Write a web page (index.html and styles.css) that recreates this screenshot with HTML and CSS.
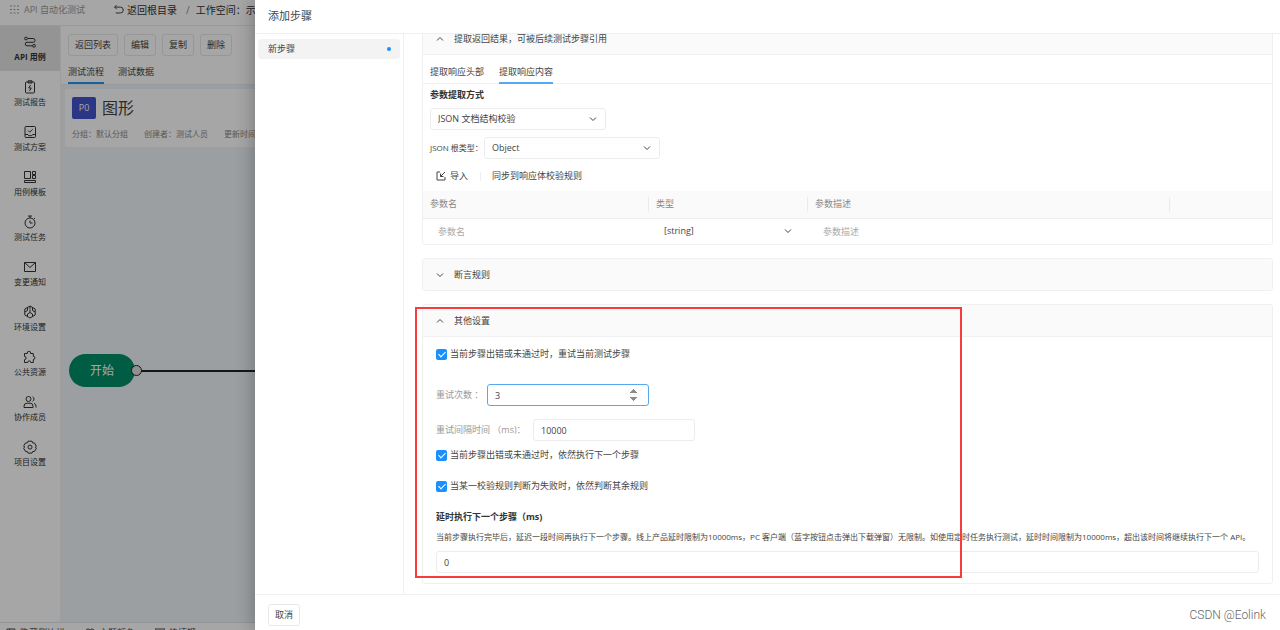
FILE: index.html
```html
<!DOCTYPE html>
<html lang="zh-CN">
<head>
<meta charset="utf-8">
<meta name="viewport" content="width=device-width, initial-scale=1">
<title>API 自动化测试</title>
<link rel="stylesheet" href="styles.css">
</head>
<body>
<svg class="sprite" aria-hidden="true">
  <symbol id="i-down" viewBox="0 0 10 10"><path d="M2 3.500 5 6.500l3-3"/></symbol>
  <symbol id="i-up" viewBox="0 0 10 10"><path d="M2 6.500 5 3.500l3 3"/></symbol>
</svg>

<div class="app">
  <header class="topbar">
    <svg class="grid-icon" viewBox="0 0 9 9"><path d="M0 1h2M3.5 1h2M7 1h2M0 4.5h2M3.5 4.5h2M7 4.5h2M0 8h2M3.5 8h2M7 8h2"/></svg>
    <span class="product">API 自动化测试</span>
    <a class="back" href="#"><svg class="icon back-icon" viewBox="0 0 12 12"><path d="M4 1.2 1.8 3.4 4 5.6M1.8 3.4H8a2.8 2.8 0 0 1 0 6.4H3"/></svg>返回根目录</a>
    <span class="slash">/</span>
    <span>工作空间：示例</span>
  </header>
  <div class="main">
    <nav class="sidebar">
      <a class="side-item active" href="#"><svg class="icon" viewBox="0 0 14 14"><path d="M4.500 3.500h5.600a1.900 1.900 0 0 1 0 3.800H4a1.700 1.700 0 0 0 0 3.500h5.500"/><circle cx="3" cy="3.500" r="1.400"/><circle cx="11" cy="10.800" r="1.400"/></svg>API 用例</a>
      <a class="side-item" href="#"><svg class="icon" viewBox="0 0 14 14"><rect x="2.500" y="2" width="9" height="11" rx="1"/><path d="M5 .8h4v2.200H5zM7.600 5 5.700 8h2.600L6.400 11"/></svg>测试报告</a>
      <a class="side-item" href="#"><svg class="icon" viewBox="0 0 14 14"><rect x="2" y="1.500" width="10.500" height="11" rx="1"/><path d="M2 9.500h3l.8 1.200h3l.8-1.200h3M5 5.500l1.700 1.700 3-3"/></svg>测试方案</a>
      <a class="side-item" href="#"><svg class="icon" viewBox="0 0 14 14"><path d="M1.500 1.500h6v7h-6zM9.500 1.500h3v3h-3zM9.500 5.500h3v3h-3zM1.500 10.500h11v2h-11z"/></svg>用例模板</a>
      <a class="side-item" href="#"><svg class="icon" viewBox="0 0 14 14"><circle cx="7" cy="8" r="5"/><path d="M5 1h4M7 1v2M11 3l1 1M7 5.500V8h2.500"/></svg>测试任务</a>
      <a class="side-item" href="#"><svg class="icon" viewBox="0 0 14 14"><path d="M1.500 2.500h11v9h-11zM1.500 2.500l5.500 5 5.500-5"/></svg>变更通知</a>
      <a class="side-item" href="#"><svg class="icon" viewBox="0 0 14 14"><path d="M7 1l5.200 3v6L7 13 1.800 10V4zM7 1v3M7 7.500 4.500 9M7 7.500 9.500 9M7 7.500v-3M4.500 2.500v3L1.800 7M9.500 2.500v3L12.200 7M4.500 11.500V9M9.500 11.500V9"/></svg>环境设置</a>
      <a class="side-item" href="#"><svg class="icon" viewBox="0 0 14 14"><path d="M1.500 3.500H4.300a1.700 1.700 0 1 1 3.300 0H10.300V6.300a1.600 1.600 0 1 1 0 3.200V12.500H7.800a1.600 1.600 0 0 0-3.200 0H1.500V9.600a1.600 1.600 0 0 0 0-3.200z"/></svg>公共资源</a>
      <a class="side-item" href="#"><svg class="icon" viewBox="0 0 14 14"><circle cx="5.500" cy="4" r="2.500"/><path d="M1 12.500v-1.300a3 3 0 0 1 3-3h3a3 3 0 0 1 3 3v1.300zM9.500 1.700a2.500 2.500 0 0 1 0 4.600M11 8.300a3 3 0 0 1 2 2.900v1.300"/></svg>协作成员</a>
      <a class="side-item" href="#"><svg class="icon" viewBox="0 0 14 14"><path d="M5 1.200h4l.7 1.700 1.800.1 1.900 3.300L12.300 7l1.100 1.200-1.900 3.200-1.800.1L9 13.100H5l-.7-1.600-1.800-.1L.6 8.200 1.700 7 .6 5.900 2.500 3l1.800-.1z"/><circle cx="7" cy="7.100" r="2"/></svg>项目设置</a>
    </nav>
    <main class="work">
      <div class="work-head">
        <div class="actions">
          <button class="btn" type="button">返回列表</button>
          <button class="btn" type="button">编辑</button>
          <button class="btn" type="button">复制</button>
          <button class="btn" type="button">删除</button>
        </div>
        <div class="tabs">
          <a class="tab current" href="#">测试流程</a>
          <a class="tab" href="#">测试数据</a>
        </div>
      </div>
      <section class="case-card">
        <div class="case-title"><span class="priority">P0</span><h1>图形</h1></div>
        <div class="case-meta"><span>分组：默认分组</span><span>创建者：测试人员</span><span>更新时间</span></div>
      </section>
      <div class="canvas">
        <div class="node">开始</div>
        <div class="edge"></div>
        <div class="port"></div>
      </div>
    </main>
  </div>
  <footer class="statusbar">
    <span><svg class="icon" viewBox="0 0 10 10"><path d="M1 1h8v8H1zM3.500 1v8M5 4h4"/></svg>隐藏侧边栏</span>
    <span><svg class="icon" viewBox="0 0 10 10"><circle cx="3" cy="3" r="2"/><circle cx="7" cy="3" r="2"/><path d="M1 9h8"/></svg>主题颜色</span>
    <span><svg class="icon" viewBox="0 0 10 10"><path d="M0 1h10v8H0zM2 4h6"/></svg>快捷键</span>
  </footer>
</div>

<div class="mask"></div>

<section class="drawer" role="dialog" aria-labelledby="drawer-title">
  <header class="drawer-head"><h2 id="drawer-title">添加步骤</h2></header>
  <div class="drawer-body">
    <nav class="steps"><a class="step" href="#">新步骤<span class="dot"></span></a></nav>
    <div class="content">
      <section class="panel first">
        <button class="panel-head" type="button"><svg class="icon chev"><use href="#i-up"/></svg>提取返回结果，可被后续测试步骤引用</button>
        <div class="subtabs">
          <a class="subtab" href="#">提取响应头部</a>
          <a class="subtab current" href="#">提取响应内容</a>
        </div>
        <div class="extract">
          <label class="field-title" for="mode">参数提取方式</label>
          <div class="select"><select id="mode"><option>JSON 文档结构校验</option></select><svg class="icon chev"><use href="#i-down"/></svg></div>
          <div class="line">
            <label class="small" for="root">JSON 根类型：</label>
            <div class="select"><select id="root"><option>Object</option></select><svg class="icon chev"><use href="#i-down"/></svg></div>
          </div>
          <div class="tools">
            <button class="link" type="button"><svg class="icon import" viewBox="0 0 10 10"><path d="M4 1H1v8h8V6M9 1 4.500 5.500M4.500 2.500v3h3"/></svg>导入</button>
            <span class="bar"></span>
            <button class="link" type="button">同步到响应体校验规则</button>
          </div>
        </div>
        <table class="params">
          <colgroup><col class="c-name"><col class="c-type"><col class="c-desc"><col class="c-ops"></colgroup>
          <thead><tr><th><span>参数名</span></th><th><span>类型</span></th><th><span>参数描述</span></th><th><span></span></th></tr></thead>
          <tbody><tr>
            <td><input type="text" placeholder="参数名" aria-label="参数名"></td>
            <td><div class="select plain"><select aria-label="类型"><option>[string]</option></select><svg class="icon chev"><use href="#i-down"/></svg></div></td>
            <td><input type="text" placeholder="参数描述" aria-label="参数描述"></td>
            <td></td>
          </tr></tbody>
        </table>
      </section>

      <section class="panel">
        <button class="panel-head" type="button"><svg class="icon chev"><use href="#i-down"/></svg>断言规则</button>
      </section>

      <section class="panel">
        <button class="panel-head" type="button"><svg class="icon chev"><use href="#i-up"/></svg>其他设置</button>
        <div class="settings">
          <label class="check"><input type="checkbox" checked>当前步骤出错或未通过时，重试当前测试步骤</label>
          <div class="line retry"><label for="times">重试次数 ：</label><input class="box number focus" id="times" type="number" value="3"></div>
          <div class="line gap"><label for="interval">重试间隔时间 （ms)：</label><input class="box number" id="interval" type="number" value="10000"></div>
          <label class="check next"><input type="checkbox" checked>当前步骤出错或未通过时，依然执行下一个步骤</label>
          <label class="check rest"><input type="checkbox" checked>当某一校验规则判断为失败时，依然判断其余规则</label>
          <label class="field-title" for="delay">延时执行下一个步骤（ms)</label>
          <p class="hint">当前步骤执行完毕后，延迟一段时间再执行下一个步骤。线上产品延时限制为10000ms，PC 客户端（蓝字按钮点击弹出下载弹窗）无限制。如使用定时任务执行测试，延时时间限制为10000ms，超出该时间将继续执行下一个 API。</p>
          <input class="box delay" id="delay" type="text" value="0">
        </div>
      </section>
    </div>
  </div>
  <footer class="drawer-foot">
    <button class="btn" type="button">取消</button>
    <span class="watermark">CSDN @Eolink</span>
  </footer>
  <div class="highlight"></div>
</section>
</body>
</html>
```
FILE: styles.css
```css
* { box-sizing: border-box; }
body {
  margin: 0;
  height: 100vh;
  overflow: hidden;
  position: relative;
  font: 9px/14px "Open Sans", "Noto Sans CJK SC", sans-serif;
  color: #444;
}
a { color: inherit; text-decoration: none; }
h1, h2, p { margin: 0; font-weight: 400; }
button, input, select { font: inherit; color: inherit; margin: 0; }
button { cursor: pointer; }
.sprite { display: none; }
.icon { fill: none; stroke: currentColor; stroke-width: 1; flex: none; }
.chev { width: 10px; height: 10px; }

.app { display: flex; flex-direction: column; height: calc(100vh + 12px); background: #fff; }
.topbar {
  display: flex; align-items: center; height: 26px; padding: 0 10px 6px; flex: none;
  border-bottom: 1px solid #ededed; font-size: 10px; white-space: nowrap; color: #333;
}
.grid-icon { width: 9px; height: 9px; margin-right: 5px; stroke: #999; stroke-width: 1; }
.product { font-size: 9px; color: #999; margin-right: 28px; }
.back { display: flex; align-items: center; gap: 3px; }
.back-icon { width: 11px; height: 11px; }
.slash { margin: 0 6px 0 9px; color: #888; }

.main { display: flex; flex: 1; min-height: 0; }
.sidebar { width: 61px; flex: none; background: #fff; border-right: 1px solid #f2f2f2; }
.side-item {
  display: flex; flex-direction: column; align-items: center; gap: 1px;
  height: 45px; padding-top: 9px; font-size: 8px; color: #333;
}
.side-item .icon { width: 14px; height: 14px; }
.side-item.active { background: #e4e4e4; font-weight: 700; }

.work { flex: 1; display: flex; flex-direction: column; min-width: 0; background: #eef4f8; }
.work-head { background: #fff; border-bottom: 1px solid #e8ecef; padding: 8px 7px 0; }
.actions { display: flex; gap: 6px; }
.btn {
  height: 22px; padding: 0 6px; background: #fff; border: 1px solid #e8e8e8; border-radius: 3px;
  white-space: nowrap;
}
.tabs { display: flex; gap: 14px; }
.tab { padding: 9px 0 3px; height: 28px; border-bottom: 2px solid transparent; }
.tab.current { border-color: #2196f3; }
.case-card { margin: 4px; padding: 7px; height: 58px; background: #fff; border-radius: 3px; }
.case-title { display: flex; align-items: center; gap: 6px; height: 24px; }
.case-title h1 { font-size: 16px; line-height: 24px; }
.priority { width: 24px; height: 22px; border-radius: 2px; background: #4353cb; color: #fff; text-align: center; line-height: 22px; }
.case-meta { display: flex; gap: 16px; margin-top: 7px; font-size: 8px; color: #888; white-space: nowrap; }
.canvas { position: relative; flex: 1; }
.node {
  position: absolute; left: 8px; top: 203px; width: 66px; height: 33px; border-radius: 17px;
  background: #008f68; color: #fff; font-size: 12px; line-height: 33px; text-align: center;
}
.edge { position: absolute; left: 76px; right: 0; top: 219px; height: 2px; background: #222; }
.port { position: absolute; left: 70px; top: 214px; width: 11px; height: 11px; border: 1px solid #222; border-radius: 50%; background: #ddd; }
.statusbar { display: flex; gap: 20px; height: 20px; flex: none; padding: 0 6px; border-top: 1px solid #dde4e8; align-items: center; font-size: 9px; }
.statusbar span { display: flex; align-items: center; gap: 4px; }
.statusbar .icon { width: 10px; height: 10px; }

.mask { position: absolute; inset: 0; background: rgba(0, 0, 0, .35); }

.drawer {
  position: absolute; top: 0; right: 0; bottom: 0; left: 255px; background: #fff;
  display: flex; flex-direction: column; box-shadow: -3px 0 16px rgba(0, 0, 0, .24);
}
.drawer-head { height: 34px; padding: 8px 13px; border-bottom: 1px solid #f0f0f0; flex: none; }
.drawer-head h2 { font-size: 11px; line-height: 16px; }
.drawer-body { display: flex; flex: 1; min-height: 0; }
.steps { width: 149px; flex: none; padding: 5px 3px; border-right: 1px solid #f0f0f0; }
.step { display: flex; align-items: center; justify-content: space-between; height: 20px; padding: 0 9px 0 10px; background: #f3f3f3; border-radius: 3px; }
.dot { width: 4px; height: 4px; border-radius: 50%; background: #1890ff; }
.content { flex: 1; min-width: 0; padding: 0 7px 0 18px; overflow: hidden; }

.panel { border: 1px solid #f0f0f0; border-radius: 3px; margin-bottom: 13px; overflow: hidden; }
.panel.first { margin-top: -12px; }
.panel-head {
  display: flex; align-items: center; gap: 9px; width: 100%; height: 31px; padding: 0 12px;
  border: 0; background: #fafafa; text-align: left;
}
.panel-head + div { border-top: 1px solid #f0f0f0; }
.subtabs { display: flex; gap: 15px; padding: 0 7px; height: 30px; border-bottom: 1px solid #f0f0f0; }
.subtab { height: 29px; padding-top: 10px; border-bottom: 2px solid transparent; }
.subtab.current { border-color: #54a9f0; }
.extract { padding: 4px 7px 0; }
.field-title { display: block; font-weight: 700; color: #333; }
.select { position: relative; width: 176px; }
.extract > .select { margin: 6px 0 7px; }
.select select {
  display: block; width: 100%; height: 22px; padding: 0 24px 0 7px; appearance: none;
  border: 1px solid #ececec; border-radius: 3px; background: #fff;
}
.select .chev { position: absolute; right: 8px; top: 6px; pointer-events: none; }
.line { display: flex; align-items: center; }
.small { font-size: 8px; width: 54px; white-space: nowrap; }
.tools { display: flex; align-items: center; height: 32px; padding: 2px 0 0 6px; }
.link { display: flex; align-items: center; gap: 4px; padding: 0; border: 0; background: none; }
.import { width: 10px; height: 10px; }
.bar { width: 1px; height: 9px; background: #eee; margin: 0 11px 0 12px; }

.params { width: 100%; border-collapse: collapse; table-layout: fixed; }
.c-name { width: 226px; }
.c-type { width: 159px; }
.c-ops { width: 102px; }
.params th { height: 27px; padding: 0; background: #fafafa; border-bottom: 1px solid #ededed; font-weight: 400; text-align: left; color: #888; }
.params th span { display: block; height: 15px; padding-left: 7px; border-right: 1px solid #ebebeb; }
.params th:last-child span { border: 0; }
.params td { height: 26px; padding: 0 7px; }
.params td input { width: 100%; height: 22px; border: 0; padding: 0 8px; outline: 0; background: none; }
.params ::placeholder { color: #aaa; opacity: 1; }
.select.plain { width: 100%; }
.select.plain select { border-color: transparent; }

.settings { padding: 10px 13px; }
.check { display: flex; align-items: center; gap: 3px; height: 14px; }
.check input {
  appearance: none; width: 11px; height: 11px; border-radius: 2px; background: #1890ff;
  display: flex; align-items: center; justify-content: center;
}
.check input::after {
  content: ""; width: 3px; height: 6px; margin-bottom: 2px;
  border: solid #fff; border-width: 0 1px 1px 0; transform: rotate(45deg);
}
.retry { margin-top: 23px; color: #999; }
.gap { margin: 13px 0 7px; color: #999; }
.retry label { width: 51px; }
.gap label { width: 97px; }
.box { height: 22px; padding: 0 7px; border: 1px solid #ececec; border-radius: 3px; background: #fff; color: #444; outline: 0; }
.number { width: 162px; appearance: textfield; }
.number.focus { border-color: #54a9f0; appearance: auto; }
.number.focus::-webkit-inner-spin-button { opacity: 1; }
.rest { margin: 17px 0; }
.hint { margin: 6px 0 7px; font-size: 8px; }
.delay { display: block; width: 100%; }

.drawer-foot { display: flex; align-items: center; justify-content: space-between; height: 36px; padding: 5px 14px 0 13px; border-top: 1px solid #f0f0f0; flex: none; }
.watermark { font: 300 12px/16px Roboto, sans-serif; color: #666; }
.highlight { position: absolute; left: 160px; top: 307px; width: 547px; height: 271px; border: 2px solid #f83b3b; pointer-events: none; }
```
